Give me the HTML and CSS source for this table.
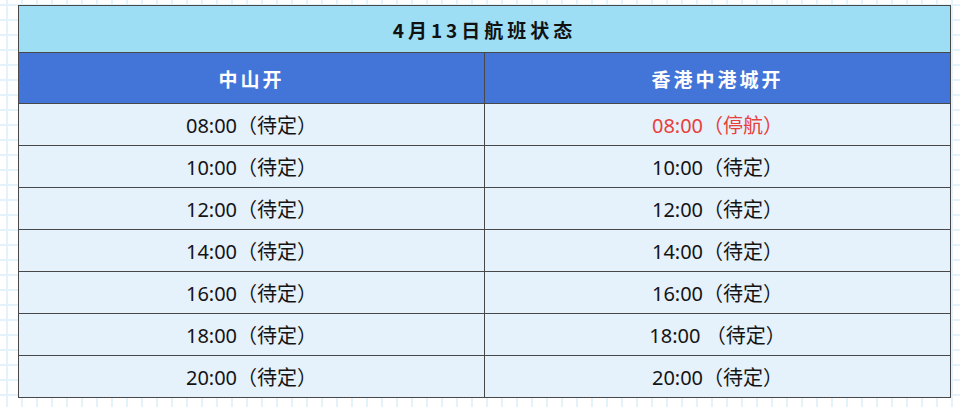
FILE: index.html
```html
<!DOCTYPE html>
<html lang="zh-CN">
<head>
<meta charset="utf-8">
<title>4月13日航班状态</title>
<link rel="stylesheet" href="styles.css">
</head>
<body>
<div class="page">
  <table class="flights">
    <thead>
      <tr><th class="title" colspan="2">4月13日航班状态</th></tr>
      <tr class="head"><th>中山开</th><th>香港中港城开</th></tr>
    </thead>
    <tbody>
      <tr><td>08:00（待定）</td><td class="stop">08:00（停航）</td></tr>
      <tr><td>10:00（待定）</td><td>10:00（待定）</td></tr>
      <tr><td>12:00（待定）</td><td>12:00（待定）</td></tr>
      <tr><td>14:00（待定）</td><td>14:00（待定）</td></tr>
      <tr><td>16:00（待定）</td><td>16:00（待定）</td></tr>
      <tr><td>18:00（待定）</td><td>18:00 （待定）</td></tr>
      <tr><td>20:00（待定）</td><td>20:00（待定）</td></tr>
    </tbody>
  </table>
</div>
</body>
</html>
```
FILE: styles.css
```css
html, body {
  margin: 0;
  padding: 0;
}
body {
  width: 960px;
  height: 407px;
  overflow: hidden;
  background-color: #ffffff;
  background-image:
    linear-gradient(to right, #e4f2fc 2px, transparent 2px),
    linear-gradient(to bottom, #e4f2fc 2px, transparent 2px);
  background-size: 15px 15px;
  background-position: 6px 4px;
}
.page {
  padding: 5px 0 0 18px;
}
.flights {
  border-collapse: collapse;
  width: 933px;
  table-layout: fixed;
  font-family: "Noto Sans", "Noto Sans CJK SC", sans-serif;
}
.flights th,
.flights td {
  border: 1px solid #484848;
  padding: 0;
  text-align: center;
}
.title {
  height: 46px;
  background: #9ddef5;
  color: #111;
  font-family: "Noto Sans CJK SC", sans-serif;
  font-size: 19px;
  font-weight: 700;
  letter-spacing: 4px;
  padding-top: 2px;
}
.head th {
  width: 50%;
  height: 50px;
  background: #4375d9;
  color: #ffffff;
  font-family: "Noto Sans CJK SC", sans-serif;
  font-size: 19px;
  font-weight: 700;
  letter-spacing: 3px;
}
.flights td {
  height: 41px;
  background: #e5f1fb;
  color: #141414;
  font-size: 20px;
  white-space: pre;
}
.flights td.stop {
  color: #e8403a;
}
```
